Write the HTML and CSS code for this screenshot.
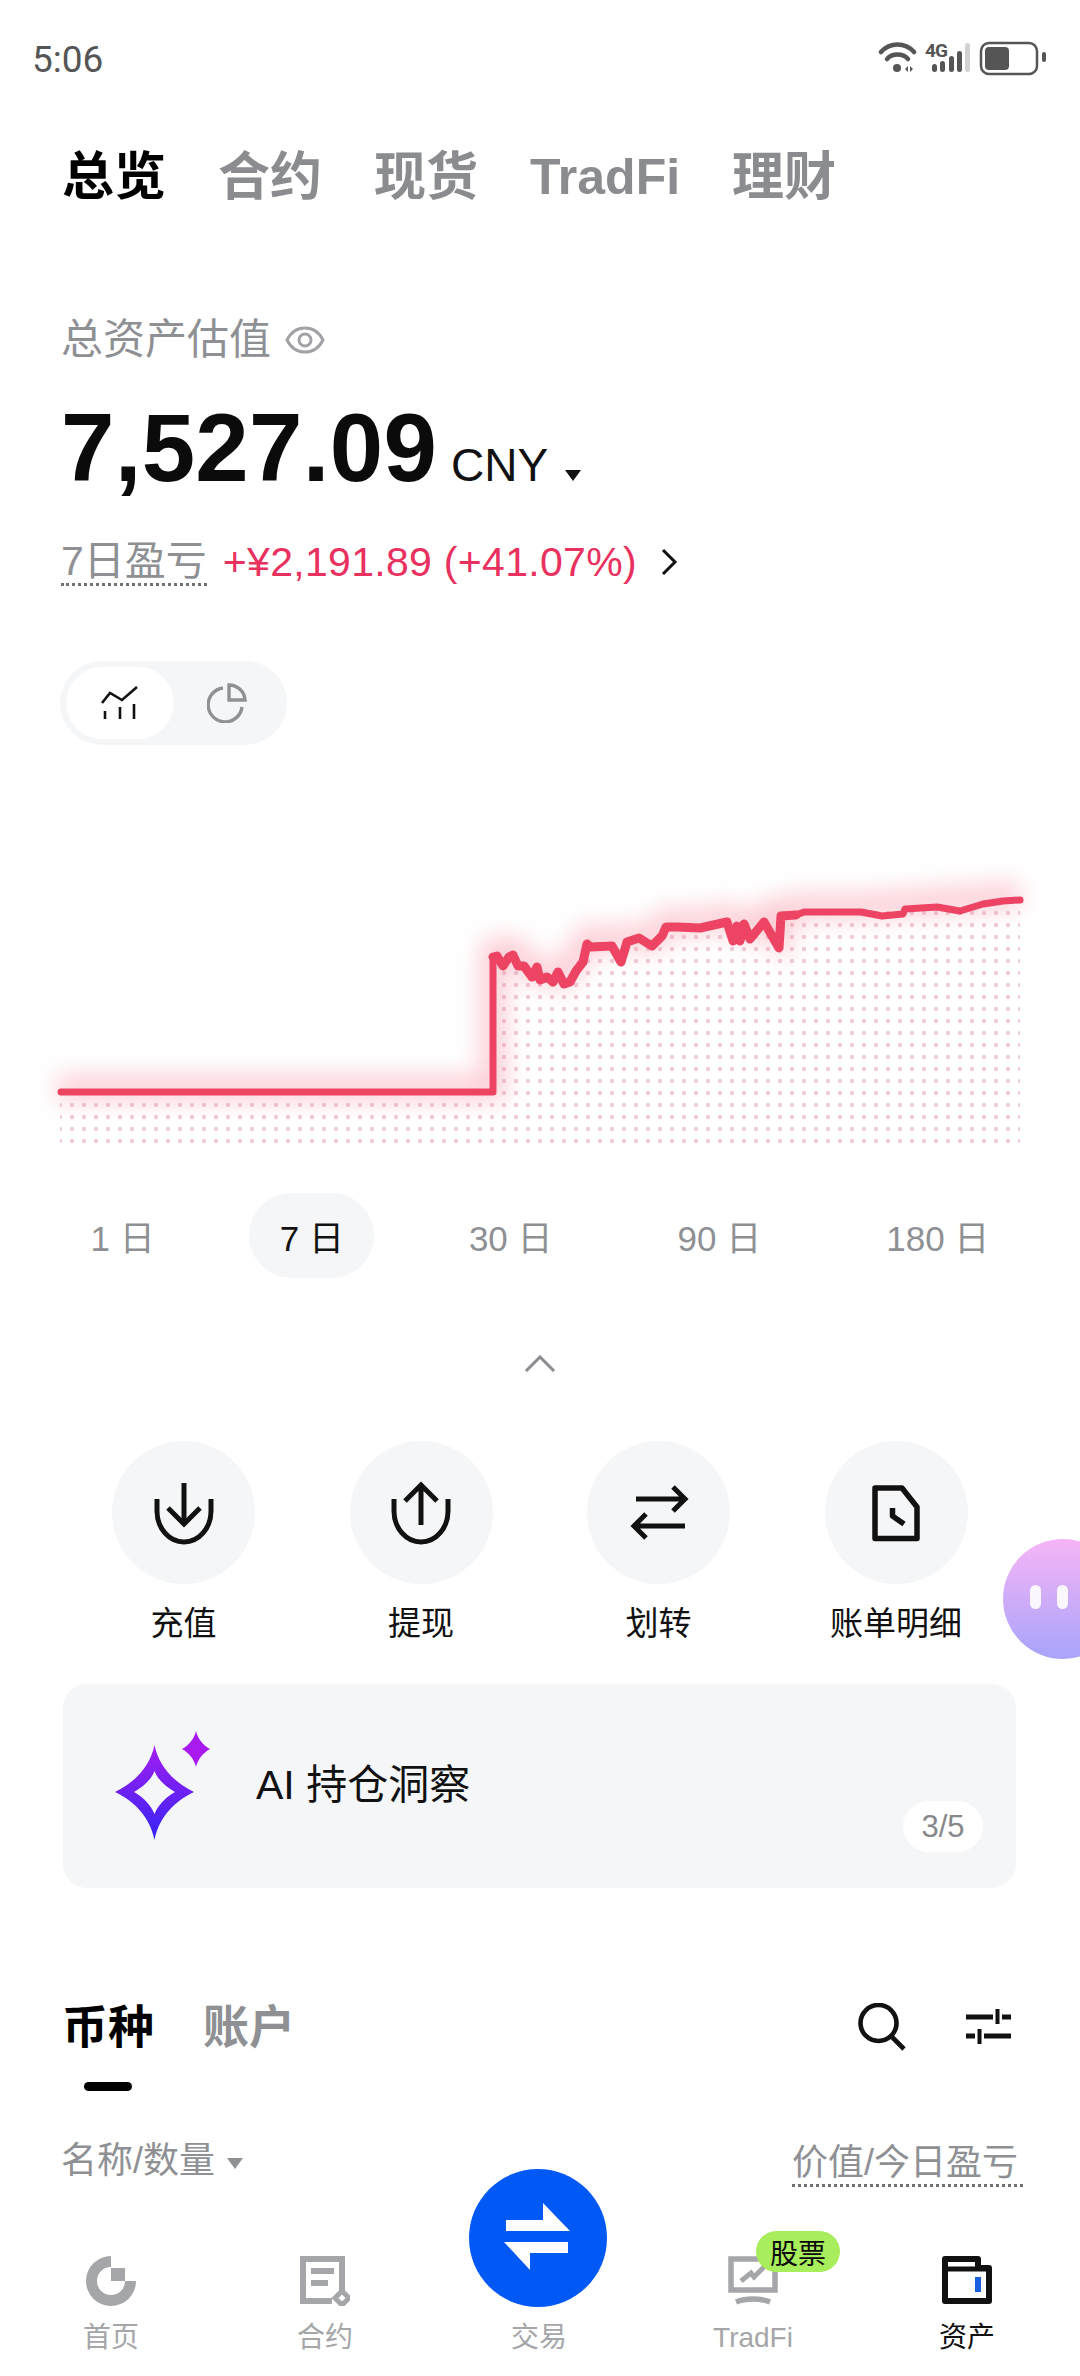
FILE: index.html
```html
<!DOCTYPE html>
<html lang="zh-CN">
<head>
<meta charset="utf-8">
<title>资产</title>
<link rel="stylesheet" href="styles.css">
</head>
<body>
<div class="page">
  <header class="status">
    <span class="time">5:06</span>
    <svg class="status-icons" width="170" height="44" viewBox="878 38 170 44">
      <g fill="none" stroke="#555" stroke-width="4.500" stroke-linecap="round">
        <path d="M881 53C890 43 905 43 914 53"/>
        <path d="M887 60C892 54 903 54 908 60"/>
      </g>
      <circle cx="897" cy="69" r="4" fill="#555"/>
      <path d="M905 70l3-3v6zM910 67l3 3-3 3z" fill="#555"/>
      <text x="925" y="58" class="status-4g">4G</text>
      <g fill="#555">
        <rect x="932" y="65" width="5" height="8" rx="2.5"/>
        <rect x="940" y="62" width="5" height="11" rx="2.5"/>
        <rect x="949" y="57" width="5" height="16" rx="2.5"/>
        <rect x="957" y="52" width="5" height="21" rx="2.5"/>
        <rect x="965" y="44" width="5" height="29" rx="2.5" fill="#d2d2d2"/>
      </g>
      <rect x="981" y="44" width="56" height="31" rx="8" fill="none" stroke="#555" stroke-width="2.5"/>
      <rect x="985" y="48" width="24" height="23" rx="4" fill="#555"/>
      <rect x="1042" y="53" width="4" height="10" rx="2" fill="#555"/>
    </svg>
  </header>

  <nav class="top-tabs">
    <span class="top-tab active">总览</span>
    <span class="top-tab">合约</span>
    <span class="top-tab">现货</span>
    <span class="top-tab latin">TradFi</span>
    <span class="top-tab">理财</span>
  </nav>

  <section class="summary">
    <div class="label-row">
      <span class="label">总资产估值</span>
      <svg width="40" height="30" viewBox="0 0 40 30" fill="none" stroke="#a0a2a6" stroke-width="3">
        <path d="M2 15C10 -1 30 -1 38 15C30 31 10 31 2 15Z"/>
        <circle cx="20" cy="15" r="6"/>
      </svg>
    </div>
    <div class="value-row">
      <span class="value">7,527.09</span>
      <span class="currency">CNY</span>
      <span class="caret"></span>
    </div>
    <div class="pnl-row">
      <span class="pnl-label">7日盈亏</span>
      <span class="pnl-value">+¥2,191.89 (+41.07%)</span>
      <svg width="18" height="28" viewBox="0 0 18 28" fill="none" stroke="#111" stroke-width="3"><path d="M3 2l12 12L3 26"/></svg>
    </div>
  </section>

  <div class="toggle">
    <span class="toggle-item on">
      <svg width="38" height="34" viewBox="0 0 38 34" fill="none" stroke="#111" stroke-width="2.6">
        <path d="M1 17L9 7L21 14L36 1"/>
        <path d="M4 33V25M19 33V21M33 33V18"/>
      </svg>
    </span>
    <span class="toggle-item">
      <svg width="40" height="40" viewBox="0 0 40 40" fill="none" stroke="#8f9194" stroke-width="3.4">
        <path d="M16 5A17 17 0 1 0 35 24"/>
        <path d="M22 2A16 16 0 0 1 38 17H22Z"/>
      </svg>
    </span>
  </div>

  <div class="chart">
    <svg width="1080" height="320" viewBox="0 850 1080 320">
      <defs>
        <pattern id="dots" x="54" y="910" width="12" height="12" patternUnits="userSpaceOnUse">
          <circle cx="6" cy="4" r="2.2" fill="#f0ccd9"/>
        </pattern>
        <filter id="glow" x="-10%" y="-40%" width="120%" height="180%">
          <feGaussianBlur stdDeviation="12"/>
        </filter>
        <clipPath id="under">
          <path d="M60 1100H493V958L513 956L532 978L553 983L564 985L587 945L612 947L627 943L652 947L666 928L700 929L727 923L750 940L764 923L779 949L781 917L861 913L905 910L983 905L1020 901V1148H60Z"/>
        </clipPath>
        <linearGradient id="sparkle" x1="0" y1="0" x2="0" y2="1">
          <stop offset="0" stop-color="#a41cf0"/>
          <stop offset="1" stop-color="#3426f6"/>
        </linearGradient>
      </defs>
      <rect x="60" y="900" width="960" height="250" fill="url(#dots)" clip-path="url(#under)"/>
      <path class="glow" filter="url(#glow)" d="M57 1089H493V952L513 950L532 970L553 975L564 977L587 939L612 941L627 937L652 941L666 922L700 923L727 917L750 930L764 917L779 935L781 911L804 907L861 907L905 904L937 902L983 899L1020 895"/>
      <path class="line" d="M61 1093H493V958"/>
      <path class="line jitter" d="M493 958L497 957L503 967L509 958L513 956L518 967L524 967L532 978L537 968L540 981L547 978L553 983L558 973L564 985L570 983L576 972L583 963L587 945L591 948L612 947L621 963L627 943L639 939L652 947L662 937L666 928L677 928L700 929L727 923L733 942L737 927L740 942L744 925L750 940L764 923L779 949L781 917L796 916"/>
      <path class="line" d="M796 916L804 913L861 913L882 917L903 915L905 910L937 908L960 912L983 905L1003 902L1020 901"/>
    </svg>
  </div>

  <div class="periods">
    <span class="period">1 日</span>
    <span class="period on">7 日</span>
    <span class="period">30 日</span>
    <span class="period">90 日</span>
    <span class="period">180 日</span>
  </div>

  <div class="collapse">
    <svg width="32" height="17" viewBox="0 0 32 17" fill="none" stroke="#8a8c8f" stroke-width="3"><path d="M2 16L16 2L30 16"/></svg>
  </div>

  <div class="actions">
    <div class="action">
      <span class="action-icon">
        <svg width="64" height="64" viewBox="0 0 64 64" fill="none" stroke="#111" stroke-width="5">
          <path d="M5 18V30A27 31 0 0 0 59 30V18"/>
          <path d="M32 2V43M16 27L32 43L48 27"/>
        </svg>
      </span>
      <span class="action-label">充值</span>
    </div>
    <div class="action">
      <span class="action-icon">
        <svg width="64" height="64" viewBox="0 0 64 64" fill="none" stroke="#111" stroke-width="5">
          <path d="M5 18V30A27 31 0 0 0 59 30V18"/>
          <path d="M32 44V4M16 20L32 4L48 20"/>
        </svg>
      </span>
      <span class="action-label">提现</span>
    </div>
    <div class="action">
      <span class="action-icon">
        <svg width="64" height="64" viewBox="0 0 64 64" fill="none" stroke="#111" stroke-width="5">
          <path d="M9 18H58M46 6L58 18L46 30"/>
          <path d="M58 45H7M19 33L7 45L19 57"/>
        </svg>
      </span>
      <span class="action-label">划转</span>
    </div>
    <div class="action">
      <span class="action-icon">
        <svg width="64" height="64" viewBox="0 0 64 64" fill="none" stroke="#111" stroke-width="5.5" stroke-linejoin="round">
          <path d="M11 7H38L53 26V57.500H11Z"/>
          <path d="M28.500 27V35L40 43"/>
        </svg>
      </span>
      <span class="action-label">账单明细</span>
    </div>
  </div>

  <div class="insight">
    <svg class="insight-icon" width="95" height="110" viewBox="0 0 95 110">
      <path fill="url(#sparkle)" fill-rule="evenodd" d="M39.500 14C44 36 60 52 79 61C60 70 44 86 39.500 109C35 86 19 70 0 61C19 52 35 36 39.500 14ZM39.500 40C36 49 28 56 19 61C28 66 36 74 39.500 83C43 74 51 66 60 61C51 56 43 49 39.500 40Z"/>
      <path fill="#a81af0" d="M81 0C83 8 88 14 95 18C88 22 83 28 81 36C79 28 74 22 67 18C74 14 79 8 81 0Z"/>
    </svg>
    <span class="insight-text">AI 持仓洞察</span>
    <span class="insight-badge">3/5</span>
  </div>

  <div class="list-tabs">
    <div class="list-tab-group">
      <span class="list-tab active">币种</span>
      <span class="list-tab">账户</span>
    </div>
    <div class="list-tools">
      <svg width="48" height="48" viewBox="0 0 48 48" fill="none" stroke="#111" stroke-width="4.6">
        <circle cx="20.500" cy="20" r="18"/>
        <path d="M33 33L46 46"/>
      </svg>
      <svg width="46" height="36" viewBox="0 0 46 36" fill="none" stroke="#111">
        <path d="M0 8H27M36 8H45M0 27H9M18 27H45" stroke-width="5"/>
        <path d="M31.500 0V15M13.500 20V35" stroke-width="4"/>
      </svg>
    </div>
  </div>
  <div class="list-underline"></div>

  <div class="list-head">
    <span class="sort">名称/数量<span class="sort-caret"></span></span>
    <span class="sort-right">价值/今日盈亏</span>
  </div>

  <nav class="bottom-nav">
    <div class="nav-item">
      <svg width="50" height="50" viewBox="0 0 50 50" fill="#a4a6a9">
        <path d="M25 0V11A14 14 0 1 0 39 25H50A25 25 0 1 1 25 0Z"/>
        <rect x="25" y="12" width="14" height="13"/>
      </svg>
      <span class="nav-label">首页</span>
    </div>
    <div class="nav-item">
      <svg width="50" height="50" viewBox="0 0 50 50" fill="none" stroke="#a4a6a9" stroke-width="6">
        <path d="M42 35V3H3V45H32"/>
        <path d="M11 15H34M11 27H28"/>
        <path d="M42 35L49 42L42 49L35 42Z" stroke-width="5"/>
      </svg>
      <span class="nav-label">合约</span>
    </div>
    <div class="nav-item">
      <a class="trade-btn" aria-label="交易">
        <svg width="70" height="70" viewBox="0 0 70 70" fill="#fff">
          <path d="M3 17H40V0L67 28H3Z"/>
          <path d="M1 39H65V50H27V67Z"/>
        </svg>
      </a>
      <span class="nav-label">交易</span>
    </div>
    <div class="nav-item">
      <svg width="50" height="50" viewBox="0 0 50 50" fill="none" stroke="#a4a6a9" stroke-width="5.500">
        <path d="M3 3H47V34H3Z"/>
        <path d="M8 46C18 42 32 42 42 46"/>
        <path d="M13 25L23 17L26 21L36 11" stroke-width="5"/>
      </svg>
      <span class="nav-label">TradFi</span>
      <span class="stock-badge">股票</span>
    </div>
    <div class="nav-item">
      <svg width="50" height="50" viewBox="0 0 50 50" fill="none">
        <path d="M3 44V3H36V12H47V45H3Z" stroke="#111" stroke-width="6" stroke-linejoin="round"/>
        <path d="M3 13H47" stroke="#111" stroke-width="5"/>
        <rect x="33" y="21" width="6" height="15" fill="#1a5fe0"/>
      </svg>
      <span class="nav-label current">资产</span>
    </div>
  </nav>

  <div class="assistant">
    <i></i><i></i>
  </div>
</div>
</body>
</html>
```
FILE: styles.css
```css
* { box-sizing: border-box; }
html, body { margin: 0; padding: 0; background: #fff; }
body {
  font-family: "Liberation Sans", "Noto Sans CJK SC", sans-serif;
  color: #111;
}
.page {
  position: relative;
  width: 1080px;
  height: 2376px;
  overflow: hidden;
  background: #fff;
}

/* status bar */
.status {
  height: 118px;
  display: flex;
  justify-content: space-between;
  align-items: center;
  padding: 0 32px;
}
.time { font: 37px/1 Roboto, sans-serif; color: #555; }
.status-icons { display: block; }
.status-4g { font: 700 19px "Roboto", sans-serif; letter-spacing: -1px; fill: #555; }

/* top tabs */
.top-tabs {
  display: flex;
  gap: 52px;
  padding: 0 0 0 62px;
  height: 118px;
  align-items: center;
}
.top-tab { font-size: 52px; line-height: 60px; font-weight: 700; color: #8a8c8f; }
.top-tab.latin { font-size: 50px; }
.top-tab.active { color: #000; }

/* summary */
.summary { padding: 82px 0 0 61px; }
.label-row { display: flex; align-items: center; gap: 14px; height: 44px; }
.label { font-size: 42px; line-height: 44px; color: #8e9094; }
.value-row { display: flex; align-items: baseline; margin-top: 38px; height: 96px; }
.value { font-size: 96px; line-height: 96px; font-weight: 700; color: #0b0b0b; letter-spacing: .3px; }
.currency { font-size: 46px; margin-left: 14px; color: #111; }
.caret {
  width: 0; height: 0;
  margin: 0 0 8px 17px;
  border-left: 8px solid transparent;
  border-right: 8px solid transparent;
  border-top: 11px solid #111;
}
.pnl-row { display: flex; align-items: center; margin-top: 42px; height: 48px; }
.pnl-label {
  font-size: 41px;
  line-height: 44px;
  color: #8e9094;
  border-bottom: 3px dotted #6f7175;
}
.pnl-value { font-size: 41px; line-height: 44px; letter-spacing: .3px; color: #e9315f; margin-left: 16px; margin-right: 23px; }

/* view toggle */
.toggle {
  display: flex;
  width: 227px;
  height: 84px;
  margin: 75px 0 0 60px;
  padding: 6px;
  border-radius: 42px;
  background: #f5f6f7;
}
.toggle-item { width: 108px; display: flex; align-items: center; justify-content: center; border-radius: 36px; }
.toggle-item.on { background: #fff; }

/* chart */
.chart { height: 320px; margin-top: 104px; }
.chart svg { display: block; }
.line { fill: none; stroke: #ee4463; stroke-width: 7; stroke-linecap: round; stroke-linejoin: round; }
.line.jitter { stroke-width: 9; }
.glow { fill: none; stroke: #f4687f; stroke-width: 24; opacity: .34; }

/* periods */
.periods { display: flex; gap: 64px; height: 85px; margin-top: 24px; padding-left: 60px; }
.period {
  padding: 0 30.5px;
  display: flex;
  align-items: center;
  font-size: 35px;
  color: #8e9094;
  border-radius: 43px;
  white-space: nowrap;
}
.period.on { color: #111; background: #f5f6f7; }

.collapse { display: flex; justify-content: center; padding-top: 77px; height: 163px; }
.collapse svg { display: block; }

/* actions */
.actions { display: flex; padding-left: 112px; gap: 94.5px; }
.action { width: 143px; display: flex; flex-direction: column; align-items: center; gap: 22px; }
.action-icon {
  width: 143px; height: 143px;
  border-radius: 50%;
  background: #f5f6f7;
  display: flex; align-items: center; justify-content: center;
}
.action-label { font-size: 33px; line-height: 36px; white-space: nowrap; color: #111; }

/* AI card */
.insight {
  position: relative;
  display: flex;
  align-items: flex-start;
  width: 953px;
  height: 204px;
  margin: 42px 0 0 63px;
  padding: 47px 0 0 52px;
  border-radius: 24px;
  background: #f5f6f8;
}
.insight-text { font-size: 41px; line-height: 48px; margin: 30px 0 0 46px; color: #111; }
.insight-icon { flex: none; }
.insight-badge {
  position: absolute;
  right: 33px;
  bottom: 36px;
  width: 80px;
  height: 51px;
  display: flex; align-items: center; justify-content: center;
  border-radius: 26px;
  background: #fff;
  font-size: 31px;
  color: #86888c;
}

/* list */
.list-tabs {
  display: flex;
  justify-content: space-between;
  align-items: center;
  height: 52px;
  margin-top: 113px;
  padding: 0 68px 0 62px;
}
.list-tab-group { display: flex; gap: 49px; }
.list-tab { font-size: 46px; line-height: 52px; font-weight: 700; color: #8e9094; }
.list-tab.active { color: #000; }
.list-tools { display: flex; align-items: center; gap: 60px; }
.list-tools svg { display: block; }
.list-underline { width: 48px; height: 9px; margin: 29px 0 0 84px; border-radius: 5px; background: #000; }
.list-head {
  display: flex;
  justify-content: space-between;
  align-items: flex-start;
  margin-top: 48px;
  padding: 0 57px 0 61px;
}
.sort { font-size: 36px; line-height: 44px; color: #8e9094; display: flex; align-items: center; }
.sort-caret {
  width: 0; height: 0;
  margin: 4px 0 0 12px;
  border-left: 8px solid transparent;
  border-right: 8px solid transparent;
  border-top: 11px solid #8e9094;
}
.sort-right {
  font-size: 36px;
  line-height: 42px;
  margin-top: 3px;
  padding-right: 5px;
  color: #8e9094;
  border-bottom: 3px dotted #6f7175;
}

/* bottom nav, over the list */
.bottom-nav {
  position: absolute;
  left: 4px;
  right: 6px;
  bottom: 0;
  height: 124px;
  display: grid;
  grid-template-columns: repeat(5, 1fr);
}
.nav-item { position: relative; display: flex; flex-direction: column; align-items: center; padding-top: 4px; }
.nav-item svg { display: block; }
.nav-label { margin-top: 14px; font-size: 28px; line-height: 36px; color: #a4a6a9; }
.nav-label.current { color: #111; }
.nav-item:nth-child(3) { padding-top: 54px; }
.trade-btn {
  position: absolute;
  left: 50%;
  top: -83px;
  width: 138px;
  height: 138px;
  margin-left: -70px;
  display: flex; align-items: center; justify-content: center;
  border-radius: 50%;
  background: #0058f5;
}
.stock-badge {
  position: absolute;
  left: 110px;
  top: -21px;
  width: 84px;
  height: 41px;
  display: flex; align-items: center; justify-content: center;
  border-radius: 21px;
  background: #a8ed5c;
  font-size: 28px;
  color: #0a0a0a;
}

/* floating helper */
.assistant {
  position: absolute;
  left: 1003px;
  top: 1539px;
  width: 120px;
  height: 120px;
  display: flex;
  gap: 16px;
  padding: 46px 0 0 27px;
  border-radius: 50%;
  background: linear-gradient(180deg, #f6b4f6 0%, #a8a4fb 100%);
}
.assistant i { display: block; width: 11px; height: 24px; border-radius: 6px; background: #fff; opacity: .9; }
```
